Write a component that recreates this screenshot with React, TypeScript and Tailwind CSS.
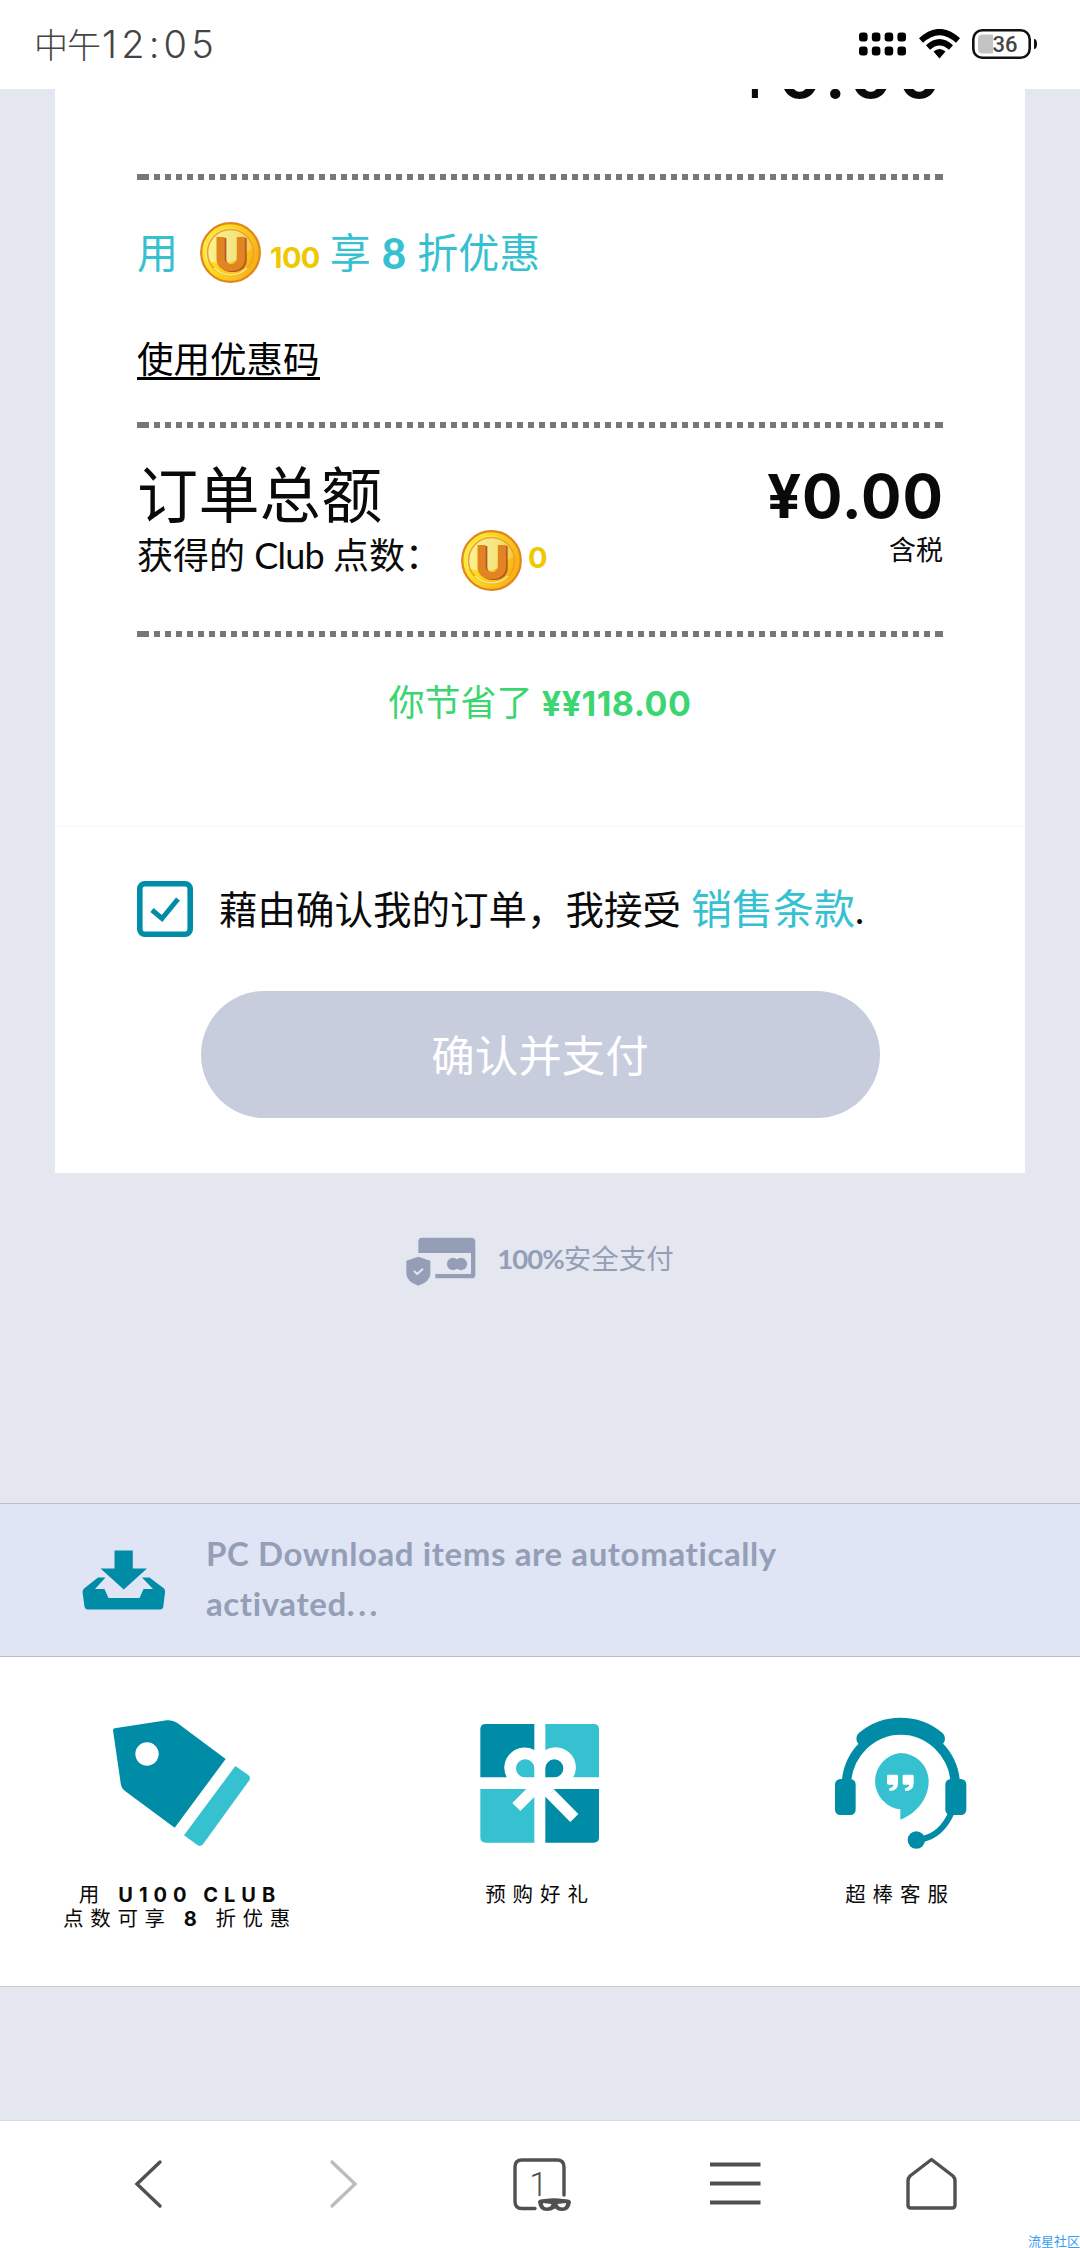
import React from 'react';

function DottedRule() {
  return (
    <div className="flex h-[6px] w-full shrink-0">
      <span className="w-[6px] bg-[#777777]" />
      <span className="flex-1 bg-[repeating-linear-gradient(90deg,#777777_0px,#777777_5.6px,transparent_5.6px,transparent_11px)]" />
      <span className="w-[6px] bg-[#777777]" />
    </div>
  );
}

function Coin({ id }: { id: string }) {
  return (
    <svg width="61" height="61" viewBox="0 0 61 61" className="shrink-0">
      <defs>
        <linearGradient id={`${id}-face`} x1="0" y1="0" x2="1" y2="0.4">
          <stop offset="0" stopColor="#fff04a" />
          <stop offset="0.45" stopColor="#fbdc1c" />
          <stop offset="1" stopColor="#f9b414" />
        </linearGradient>
        <linearGradient id={`${id}-shine`} x1="0" y1="0" x2="1" y2="0">
          <stop offset="0" stopColor="#fbf6a8" />
          <stop offset="0.6" stopColor="#f3ea9c" />
          <stop offset="1" stopColor="#f8c83a" />
        </linearGradient>
      </defs>
      <circle cx="30.5" cy="30.5" r="29.3" fill={`url(#${id}-face)`} stroke="#e08424" strokeWidth="2.2" />
      <path d="M7 39 A25 25 0 0 1 30 6 A25 25 0 0 1 54 26 C44 29 38 43 20 41 Q12 40 7 39Z" fill={`url(#${id}-shine)`} opacity="0.8" />
      <circle cx="30.5" cy="30.5" r="23" fill="none" stroke="#f0a030" strokeWidth="1.7" />
      <path d="M14 46 A23 23 0 0 0 47 46" fill="none" stroke="#fbe58a" strokeWidth="1.6" />
      <text x="32.5" y="50" textAnchor="middle" fontFamily="Inter, sans-serif" fontWeight="800" fontSize="46" fill="#b5561c">
        U
      </text>
      <text x="30.8" y="49.2" textAnchor="middle" fontFamily="Inter, sans-serif" fontWeight="800" fontSize="46" fill="#e08424">
        U
      </text>
    </svg>
  );
}

function StatusBar() {
  return (
    <header className="flex h-[89px] shrink-0 items-start justify-between bg-white pl-[34px] pr-[42px] pt-[23px]">
      <span className="text-[34px] font-light leading-[42px] text-[#444444]">
        <span className="tracking-[-1px]">中午</span>
        <span className="ml-[2px] font-[Inter] text-[38px] tracking-[4.2px]">12:05</span>
      </span>
      <div className="flex items-center gap-[12px] pt-[6px]">
        <svg width="48" height="24" viewBox="0 0 48 24">
          {[0, 1, 2, 3].map((i) => (
            <React.Fragment key={i}>
              <rect x={i * 12.8} y="0.5" width="8.6" height="9" rx="3" />
              <rect x={i * 12.8} y="14.5" width="8.6" height="9" rx="3" />
            </React.Fragment>
          ))}
        </svg>
        <svg width="41" height="30" viewBox="0 0 41 30" fill="none" stroke="#000" strokeWidth="6">
          <path d="M2 11.5 Q20.5 -5.5 39 11.5" />
          <path d="M9 18.5 Q20.5 8 32 18.5" />
          <path d="M20.5 29.5 L14.5 22.5 Q20.5 17.5 26.5 22.5Z" fill="#000" stroke="none" />
        </svg>
        <svg width="66" height="30" viewBox="0 0 66 30">
          <path d="M6 10 Q6 5.5 10.5 5.5 H21 V24.5 H10.5 Q6 24.5 6 20Z" fill="#c3c3c3" />
          <rect x="1.3" y="1.3" width="56.4" height="27.4" rx="9" fill="none" stroke="#111" strokeWidth="2.6" />
          <path d="M62 10 Q65 10 65 15 Q65 20 62 20Z" fill="#111" />
          <text x="33" y="22.6" textAnchor="middle" fontFamily="Roboto, sans-serif" fontWeight="500" fontSize="22" fill="#444">
            36
          </text>
        </svg>
      </div>
    </header>
  );
}

function OrderCard() {
  return (
    <section className="mx-[55px] flex h-[1084px] shrink-0 flex-col overflow-hidden bg-white">
      <div className="flex h-[737px] shrink-0 flex-col px-[82px]">
        {/* subtotal, scrolled half under the status bar */}
        <div className="flex h-[85px] shrink-0 justify-end overflow-hidden">
          <div className="-mr-[3px] -mt-[55px] font-[Inter] text-[66px] leading-[80px] tracking-[5px] text-[#0a0a0a]">
            ¥<span className="font-semibold">0.00</span>
          </div>
        </div>

        <DottedRule />

        <div className="flex h-[145px] shrink-0 items-center text-[41px] leading-[48px] text-[#36c1d0]">
          <span>用</span>
          <span className="ml-[22px] flex">
            <Coin id="spend" />
          </span>
          <span className="ml-[9px] mt-[10px] font-[Inter] text-[29px] font-bold tracking-[-0.6px] text-[#f0c800]">100</span>
          <span className="ml-[10px]">享</span>
          <span className="ml-[11px] font-[Lato] text-[42px] font-black">8</span>
          <span className="ml-[11px]">折优惠</span>
        </div>

        <div className="flex h-[97px] shrink-0 items-start pt-[16px]">
          <a className="border-b-[3px] border-black text-[36.5px] leading-[36px] text-black">使用优惠码</a>
        </div>

        <DottedRule />

        <div className="flex h-[203px] shrink-0 justify-between pt-[34px] text-[#0a0a0a]">
          <div>
            <h2 className="-mt-[1px] mb-[1px] text-[61px] leading-[68px] tracking-[0.4px]">订单总额</h2>
            <div className="flex items-center text-[36px] leading-[60px]">
              <span className="-mt-[12px] w-[300px] whitespace-nowrap">
                获得的 <span className="tracking-[-0.8px]">Club</span> 点数：
              </span>
              <span className="ml-[24px] flex">
                <Coin id="earn" />
              </span>
              <span className="-mt-[5px] ml-[6px] font-[Inter] text-[29px] font-bold text-[#f0c800]">0</span>
            </div>
          </div>
          <div className="text-right">
            <div className="-mr-[1px] font-[Inter] text-[60px] font-bold leading-[68px] tracking-[1px]">¥0.00</div>
            <div className="text-[27px] leading-[40px]">含税</div>
          </div>
        </div>

        <DottedRule />

        <div className="pt-[40px] text-center text-[36px] leading-[50px] text-[#3dd572]">
          你节省了 <span className="font-[Inter] text-[34px] font-bold tracking-[0.5px]">¥¥118.00</span>
        </div>
      </div>

      <div className="flex flex-col items-center border-t border-[#f8f8f8] px-[82px] pt-[54px]">
        <label className="flex w-full items-center whitespace-nowrap text-[38.5px] leading-[56px] text-[#0a0a0a]">
          <svg width="56" height="56" viewBox="0 0 56 56" fill="none" stroke="#008ca7">
            <rect x="2.8" y="2.8" width="50.4" height="50.4" rx="5" strokeWidth="5.6" />
            <path d="M15 29 L25 37.5 L41 18" strokeWidth="5" />
          </svg>
          <span className="ml-[26px]">藉由确认我的订单，我接受</span>
          <span className="ml-[10px] text-[41px] text-[#36c1d0]">销售条款</span>
          <span>.</span>
        </label>
        <button
          type="button"
          className="mt-[54px] h-[127px] w-[679px] rounded-full bg-[#c8cddd] text-[43.5px] leading-[60px] text-white"
        >
          确认并支付
        </button>
      </div>
    </section>
  );
}

function SecurePayment() {
  return (
    <div className="flex h-[330px] shrink-0 items-start justify-center pt-[64px] text-[#949fb7]">
      <svg width="70" height="50" viewBox="80 82 210 150" fill="currentColor" className="mr-[21px]">
        <path d="M117 130 V96 Q117 84 129 84 H276 Q288 84 288 96 V195 Q288 206 276 206 H168 V193 H275 V130Z" />
        <circle cx="221" cy="163" r="18.5" />
        <circle cx="245" cy="163" r="18.5" />
        <path d="M117 141 L153 153 V192 Q153 215 117 228 Q81 215 81 192 V153Z" />
        <path d="M104 184 L114 193 L131 177" fill="none" stroke="#e4e7f0" strokeWidth="6" />
      </svg>
      <span className="text-[27.5px] leading-[44px]">
        <span className="font-[Lato] font-bold tracking-[-1px]">100%</span>安全支付
      </span>
    </div>
  );
}

function DownloadBanner() {
  return (
    <div className="flex h-[154px] shrink-0 items-start border-y border-[#b9bdc9] bg-[#dfe5f4] pl-[82px] pt-[24px]">
      <svg width="83" height="60" viewBox="82 59.5 83 60" fill="#008ca7" className="mt-[22px]">
        <path d="M114.5 60 H132.8 V78 H147 L123.8 99 L100.5 78 H114.5Z" />
        <path d="M98 87 H105.5 L95 98.5 H104.5 L108.5 107.5 H139.5 L143.5 98.5 H153 L142 87 H149.5 L164 98 Q165.3 100 165 102 L163.3 116 Q163 119 160 119 H88 Q85 119 84.5 116 L82.6 102 Q82.4 100 84 98Z" />
      </svg>
      <p className="ml-[41px] font-[Lato] text-[33px] font-bold leading-[50px] tracking-[0.6px] text-[#949fb7]">
        PC Download items are automatically
        <br />
        activated<span className="tracking-[3.6px]">...</span>
      </p>
    </div>
  );
}

function TagIcon() {
  return (
    <svg width="140" height="130" viewBox="210 87 420 390">
      <path d="M224 115 L380 91 Q398 89 412 99 L557 207 L404 413 L256 304 Q243 294 242 279 L219 121 Q219 116 224 115Z" fill="#008ca7" />
      <circle cx="321" cy="192" r="35" fill="#fff" />
      <path d="M586 228 L625 255 Q633 262 628 271 L489 463 Q482 471 472 465 L432 436Z" fill="#36c1d0" />
    </svg>
  );
}

function GiftIcon() {
  return (
    <svg width="120" height="130" viewBox="122 87 360 390">
      <path d="M285 102 H139 Q123 102 123 118 V262 H285Z" fill="#008ca7" />
      <path d="M318 102 H463 Q479 102 479 118 V262 H318Z" fill="#36c1d0" />
      <path d="M285 458 H139 Q123 458 123 442 V297 H285Z" fill="#36c1d0" />
      <path d="M318 458 H463 Q479 458 479 442 V297 H318Z" fill="#008ca7" />
      <path d="M203 264 A61 61 0 0 1 285 180 H318 A61 61 0 0 1 401 264Z" fill="#fff" />
      <path d="M257 208 A27 27 0 0 1 285 235 V262 H257 A27 27 0 0 1 257 208Z" fill="#36c1d0" />
      <path d="M345 208 A27 27 0 0 1 345 262 H318 V235 A27 27 0 0 1 345 208Z" fill="#008ca7" />
      <path d="M302 280 L231 351 M302 280 L405 384" stroke="#fff" strokeWidth="34" />
    </svg>
  );
}

function HeadsetIcon() {
  return (
    <svg width="134" height="135" viewBox="103 78 402 405">
      <g fill="none" stroke="#008ca7">
        <path d="M143 280 A164 170 0 0 1 470 280" strokeWidth="28" />
        <path d="M196 149 A172 172 0 0 1 416 149" strokeWidth="46" strokeLinecap="round" />
        <path d="M458 372 Q428 438 372 450" strokeWidth="18" />
      </g>
      <rect x="109" y="270" width="62" height="108" rx="16" fill="#008ca7" />
      <rect x="440" y="270" width="63" height="108" rx="16" fill="#008ca7" />
      <circle cx="353" cy="453" r="26" fill="#008ca7" />
      <path d="M305 192 A85 85 0 0 0 305 361 V392 C352 375 390 330 390 277 A85 85 0 0 0 305 192Z" fill="#36c1d0" />
      <path d="M269 257 H294 Q298 257 298 261 V282 Q298 306 272 306 V297 Q284 296 285 287 H269 Q265 287 265 283 V261 Q265 257 269 257Z" fill="#fff" />
      <path d="M316 257 H341 Q345 257 345 261 V282 Q345 306 319 306 V297 Q331 296 332 287 H316 Q312 287 312 283 V261 Q312 257 316 257Z" fill="#fff" />
    </svg>
  );
}

function Perks() {
  return (
    <section className="grid h-[330px] shrink-0 grid-cols-3 border-b border-[#c9cccf] bg-white pt-[60px] text-center text-[20.5px] leading-[24px] tracking-[6.9px] text-[#0a0a0a]">
      <div className="flex flex-col items-center pt-[2px]">
        <TagIcon />
        <div className="mt-[33px] h-[24px] whitespace-nowrap">
          用 <b className="font-[Inter] text-[20px] font-bold tracking-[6px]">U100 CLUB</b>
        </div>
        <div className="h-[24px] whitespace-nowrap tracking-[6.7px]">
          点数可享 <b className="font-[Inter] text-[20px] font-bold">8</b> 折优惠
        </div>
      </div>
      <div className="flex flex-col items-center pt-[2px]">
        <GiftIcon />
        <p className="mt-[33px]">预购好礼</p>
      </div>
      <div className="-mt-[2px] flex flex-col items-center">
        <HeadsetIcon />
        <p className="mt-[32px]">超棒客服</p>
      </div>
    </section>
  );
}

function BrowserNav() {
  return (
    <nav className="relative flex h-[128px] shrink-0 items-start justify-between border-t border-[#d9dade] bg-white pl-[118px] pr-[119px] pt-[32px]">
      <svg width="60" height="60" viewBox="0 0 60 60" fill="none" stroke="#505050" strokeWidth="3.4" strokeLinecap="round">
        <path d="M42 9 L19 31 L42 53" />
      </svg>
      <svg width="60" height="60" viewBox="0 0 60 60" fill="none" stroke="#bdbdbd" strokeWidth="3.4" strokeLinecap="round">
        <path d="M19 9 L42 31 L19 53" />
      </svg>
      <svg width="64" height="60" viewBox="1 0 64 60">
        <path d="M28 55.5 H15 Q8 55.5 8 48.5 V14 Q8 7 15 7 H50 Q57 7 57 14 V42" fill="none" stroke="#505050" strokeWidth="3.4" strokeLinecap="round" />
        <text x="31.5" y="43" textAnchor="middle" fontFamily="Roboto, sans-serif" fontWeight="300" fontSize="33" fill="#505050">
          1
        </text>
        <path
          d="M31 49 Q31 46 38 46 Q47 44.5 56 46 Q64 46 64 49 Q63 58 55 58 Q51 58 48 55.5 Q44 58 40 58 Q32 58 31 49Z M36 50 Q36 54.5 40 54.5 Q44 54 44.5 51Z M59 50 Q59 54.5 55 54.5 Q51 54 50.5 51Z"
          fill="#505050"
          fillRule="evenodd"
        />
      </svg>
      <svg width="60" height="60" viewBox="0 0 60 60" stroke="#505050" strokeWidth="3.8">
        <path d="M4 11.5 H54.5 M4 30.5 H54.5 M4 49.5 H54.5" />
      </svg>
      <svg width="60" height="60" viewBox="0 0 60 60" fill="none" stroke="#505050" strokeWidth="3.4" strokeLinejoin="round">
        <path d="M30.5 6.5 L52 23 Q54 25 54 28 V52 Q54 55 51 55 H10 Q7 55 7 52 V28 Q7 25 9 23Z" />
      </svg>
      <span className="absolute bottom-0 right-0 text-[13px] leading-[13px] text-[#3a9cf0]">流星社区</span>
    </nav>
  );
}

export default function App() {
  return (
    <div className="flex h-[2248px] w-[1080px] flex-col overflow-hidden bg-[#e4e7f0] font-['Lato','Noto_Sans_CJK_SC',sans-serif]">
      <StatusBar />
      <OrderCard />
      <SecurePayment />
      <DownloadBanner />
      <Perks />
      <div className="h-[133px] shrink-0" />
      <BrowserNav />
    </div>
  );
}
